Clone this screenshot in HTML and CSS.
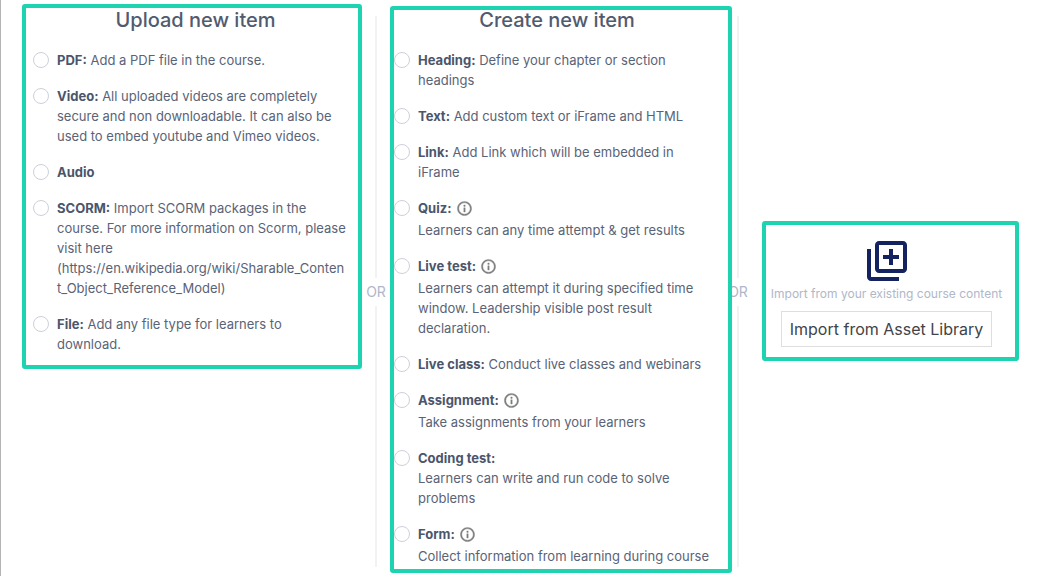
FILE: index.html
```html
<!DOCTYPE html>
<html lang="en">
<head>
  <meta charset="UTF-8">
  <meta name="viewport" content="width=device-width, initial-scale=1.0">
  <title>Add course item</title>
  <link rel="stylesheet" href="styles.css">
</head>
<body>
  <svg class="sprite" aria-hidden="true">
    <symbol id="info" viewBox="0 0 24 24">
      <path d="M11 7h2v2h-2zm0 4h2v6h-2zm1-9C6.48 2 2 6.48 2 12s4.48 10 10 10 10-4.48 10-10S17.52 2 12 2zm0 18c-4.41 0-8-3.59-8-8s3.59-8 8-8 8 3.59 8 8-3.59 8-8 8z"/>
    </symbol>
  </svg>

  <main class="add-item">
    <section class="panel upload">
      <h2>Upload new item</h2>
      <div class="options">
        <label class="option">
          <input type="radio" name="item">
          <span class="text"><b>PDF:</b> Add a PDF file in the course.</span>
        </label>
        <label class="option">
          <input type="radio" name="item">
          <span class="text"><b>Video:</b> All uploaded videos are completely secure and non downloadable. It can also be used to embed youtube and Vimeo videos.</span>
        </label>
        <label class="option">
          <input type="radio" name="item">
          <span class="text"><b>Audio</b></span>
        </label>
        <label class="option">
          <input type="radio" name="item">
          <span class="text"><b>SCORM:</b> Import SCORM packages in the course. For more information on Scorm, please visit here <span class="url">(https://en.wikipedia.org/wiki/Sharable_Content_Object_Reference_Model)</span></span>
        </label>
        <label class="option">
          <input type="radio" name="item">
          <span class="text"><b>File:</b> Add any file type for learners to download.</span>
        </label>
      </div>
    </section>

    <div class="divider"><span>OR</span></div>

    <section class="panel create">
      <h2>Create new item</h2>
      <div class="options">
        <label class="option">
          <input type="radio" name="item">
          <span class="text"><b>Heading:</b> Define your chapter or section headings</span>
        </label>
        <label class="option">
          <input type="radio" name="item">
          <span class="text"><b>Text:</b> Add custom text or iFrame and HTML</span>
        </label>
        <label class="option">
          <input type="radio" name="item">
          <span class="text"><b>Link:</b> Add Link which will be embedded in iFrame</span>
        </label>
        <label class="option">
          <input type="radio" name="item">
          <span class="text"><span class="title"><b>Quiz:</b><svg class="info"><use href="#info"/></svg></span>Learners can any time attempt &amp; get results</span>
        </label>
        <label class="option">
          <input type="radio" name="item">
          <span class="text"><span class="title"><b>Live test:</b><svg class="info"><use href="#info"/></svg></span>Learners can attempt it during specified time window. Leadership visible post result declaration.</span>
        </label>
        <label class="option">
          <input type="radio" name="item">
          <span class="text"><b>Live class:</b> Conduct live classes and webinars</span>
        </label>
        <label class="option">
          <input type="radio" name="item">
          <span class="text"><span class="title"><b>Assignment:</b><svg class="info"><use href="#info"/></svg></span>Take assignments from your learners</span>
        </label>
        <label class="option">
          <input type="radio" name="item">
          <span class="text"><b>Coding test:</b><br>Learners can write and run code to solve problems</span>
        </label>
        <label class="option">
          <input type="radio" name="item">
          <span class="text"><span class="title"><b>Form:</b><svg class="info"><use href="#info"/></svg></span>Collect information from learning during course</span>
        </label>
      </div>
    </section>

    <div class="divider"><span>OR</span></div>

    <section class="panel import">
      <svg class="library" viewBox="0 0 24 24" aria-hidden="true">
        <path d="M4 6H2v14c0 1.1.9 2 2 2h14v-2H4V6zm16-4H8c-1.1 0-2 .9-2 2v12c0 1.1.9 2 2 2h12c1.1 0 2-.9 2-2V4c0-1.1-.9-2-2-2zm0 14H8V4h12v12zm-7-2h2v-3h3V9h-3V6h-2v3h-3v2h3z"/>
      </svg>
      <p>Import from your existing course content</p>
      <button type="button">Import from Asset Library</button>
    </section>
  </main>
</body>
</html>
```

FILE: styles.css
```css
* {
  box-sizing: border-box;
}

body {
  margin: 0;
  font-family: Inter, "Liberation Sans", sans-serif;
  font-size: 13px;
  line-height: 20px;
  color: #596377;
  background: #fff;
}

.sprite {
  display: none;
}

.add-item {
  display: grid;
  grid-template-columns: 340fr 28px 342fr 12px 275fr;
  min-height: 100vh;
  padding: 4px 23px 0 21px;
  border-left: 1px solid #b4b4b4;
}

.panel {
  align-self: start;
  border: 4px solid #1dd3b0;
  border-radius: 3px;
}

.upload {
  padding: 2px 0 11px 7px;
}

.create {
  position: relative;
  z-index: 1;
  margin: 2px 0 3px;
  padding: 0 8px 3px 0;
}

h2 {
  margin: 0 0 20px;
  font-size: 20px;
  font-weight: 500;
  line-height: 20px;
  text-align: center;
  color: #515b70;
}

.options {
  display: flex;
  flex-direction: column;
  gap: 16px;
  padding-right: 8px;
}

.upload .options {
  padding-right: 11px;
}

.option {
  display: flex;
  gap: 8px;
}

.option input {
  appearance: none;
  flex: none;
  width: 16px;
  height: 16px;
  margin: 2px 0;
  border: 1px solid #cdd0dc;
  border-radius: 50%;
  background: #fff;
}

.option input:checked {
  border: 5px solid #1dd3b0;
}

.text {
  flex: 1;
  min-width: 0;
}

.text b {
  font-weight: 700;
  color: #4b556b;
}

.url {
  overflow-wrap: anywhere;
}

.title {
  display: flex;
  gap: 4px;
  height: 22px;
}

.info {
  width: 17px;
  height: 17px;
  margin-top: 2px;
  fill: #7d7d7d;
  stroke: #7d7d7d;
  stroke-width: 0.5;
}

.divider {
  display: flex;
  flex-direction: column;
  align-items: center;
  margin: 12px 0 9px;
  font-size: 14px;
  line-height: 28px;
  color: #b0b7c9;
}

.divider::before,
.divider::after {
  content: "";
  flex: 1;
  width: 2px;
  background: #f2f2f4;
}

.import {
  display: flex;
  flex-direction: column;
  align-items: center;
  align-self: center;
  margin: 2px 0 0 18px;
  padding: 12px 8px 10px 0;
}

.library {
  width: 48px;
  height: 48px;
  fill: #14235f;
}

.import p {
  margin: 0 0 8px;
  font-size: 12px;
  line-height: 18px;
  white-space: nowrap;
  color: #b0b7c9;
}

.import button {
  height: 36px;
  padding: 0 8px;
  border: 1px solid #dedede;
  background: #fff;
  font-family: inherit;
  font-size: 16px;
  color: #3f4448;
  white-space: nowrap;
}
```
